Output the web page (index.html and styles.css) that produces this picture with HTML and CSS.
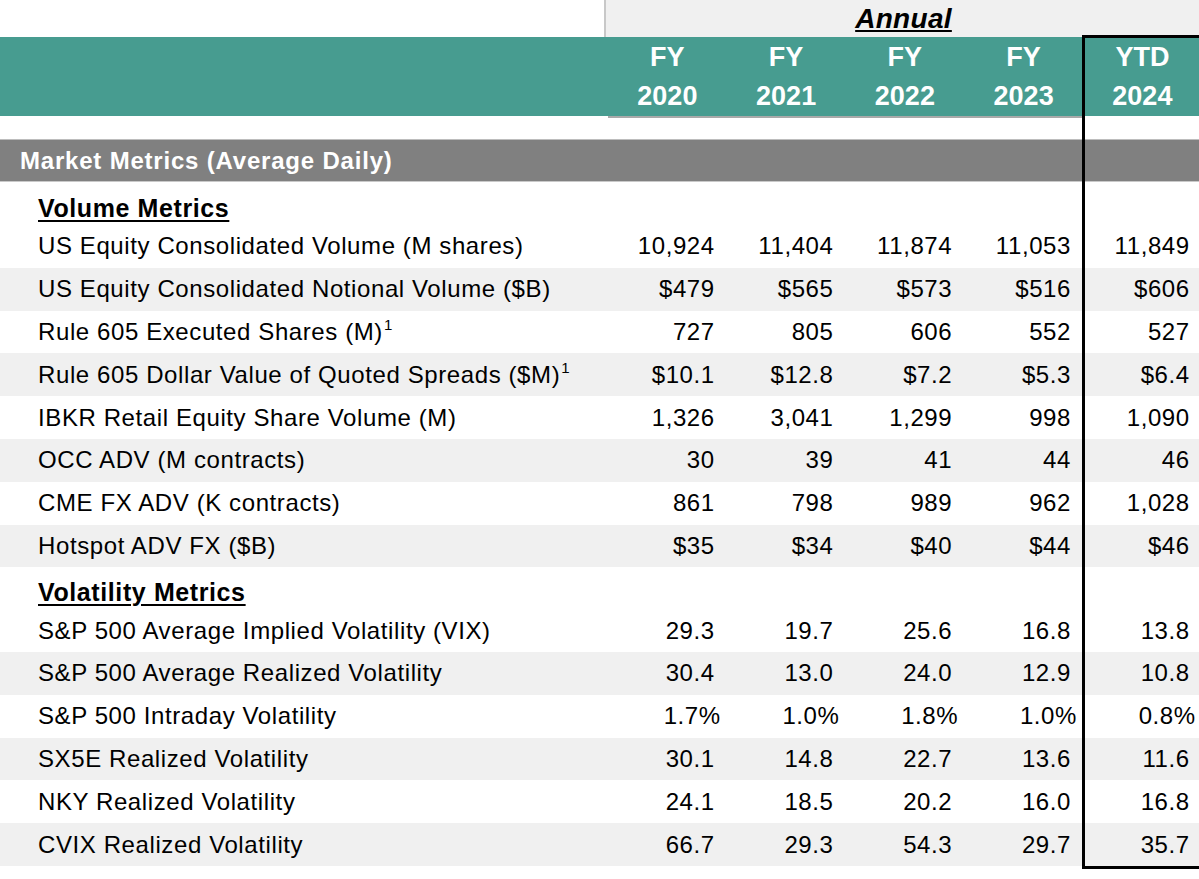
FILE: index.html
```html
<!DOCTYPE html>
<html lang="en">
<head>
<meta charset="utf-8">
<title>Market Metrics</title>
<link rel="stylesheet" href="styles.css">
</head>
<body>
<div class="sheet">
  <div class="annual-band"><span class="annual">Annual</span></div>
  <div class="head">
    <div class="head-label"></div>
    <div class="head-cell fy">FY<br>2020</div>
    <div class="head-cell fy">FY<br>2021</div>
    <div class="head-cell fy">FY<br>2022</div>
    <div class="head-cell fy">FY<br>2023</div>
    <div class="head-cell">YTD<br>2024</div>
  </div>
  <div class="spacer"></div>
  <div class="section">Market Metrics (Average Daily)</div>

  <div class="group">Volume Metrics</div>
  <div class="row"><div class="label">US Equity Consolidated Volume (M shares)</div><div class="v">10,924</div><div class="v">11,404</div><div class="v">11,874</div><div class="v">11,053</div><div class="v">11,849</div></div>
  <div class="row alt"><div class="label">US Equity Consolidated Notional Volume ($B)</div><div class="v">$479</div><div class="v">$565</div><div class="v">$573</div><div class="v">$516</div><div class="v">$606</div></div>
  <div class="row"><div class="label">Rule 605 Executed Shares (M)<sup>1</sup></div><div class="v">727</div><div class="v">805</div><div class="v">606</div><div class="v">552</div><div class="v">527</div></div>
  <div class="row alt"><div class="label">Rule 605 Dollar Value of Quoted Spreads ($M)<sup>1</sup></div><div class="v">$10.1</div><div class="v">$12.8</div><div class="v">$7.2</div><div class="v">$5.3</div><div class="v">$6.4</div></div>
  <div class="row"><div class="label">IBKR Retail Equity Share Volume (M)</div><div class="v">1,326</div><div class="v">3,041</div><div class="v">1,299</div><div class="v">998</div><div class="v">1,090</div></div>
  <div class="row alt"><div class="label">OCC ADV (M contracts)</div><div class="v">30</div><div class="v">39</div><div class="v">41</div><div class="v">44</div><div class="v">46</div></div>
  <div class="row"><div class="label">CME FX ADV (K contracts)</div><div class="v">861</div><div class="v">798</div><div class="v">989</div><div class="v">962</div><div class="v">1,028</div></div>
  <div class="row alt"><div class="label">Hotspot ADV FX ($B)</div><div class="v">$35</div><div class="v">$34</div><div class="v">$40</div><div class="v">$44</div><div class="v">$46</div></div>

  <div class="group group-2">Volatility Metrics</div>
  <div class="row"><div class="label">S&amp;P 500 Average Implied Volatility (VIX)</div><div class="v">29.3</div><div class="v">19.7</div><div class="v">25.6</div><div class="v">16.8</div><div class="v">13.8</div></div>
  <div class="row alt"><div class="label">S&amp;P 500 Average Realized Volatility</div><div class="v">30.4</div><div class="v">13.0</div><div class="v">24.0</div><div class="v">12.9</div><div class="v">10.8</div></div>
  <div class="row"><div class="label">S&amp;P 500 Intraday Volatility</div><div class="v pct">1.7%</div><div class="v pct">1.0%</div><div class="v pct">1.8%</div><div class="v pct">1.0%</div><div class="v pct">0.8%</div></div>
  <div class="row alt"><div class="label">SX5E Realized Volatility</div><div class="v">30.1</div><div class="v">14.8</div><div class="v">22.7</div><div class="v">13.6</div><div class="v">11.6</div></div>
  <div class="row"><div class="label">NKY Realized Volatility</div><div class="v">24.1</div><div class="v">18.5</div><div class="v">20.2</div><div class="v">16.0</div><div class="v">16.8</div></div>
  <div class="row alt"><div class="label">CVIX Realized Volatility</div><div class="v">66.7</div><div class="v">29.3</div><div class="v">54.3</div><div class="v">29.7</div><div class="v">35.7</div></div>

  <div class="ytd-box"></div>
</div>
</body>
</html>
```

FILE: styles.css
```css
html, body {
  margin: 0;
  padding: 0;
  background: #ffffff;
  overflow: hidden;
}

.sheet {
  position: relative;
  width: 1199px;
  height: 879px;
  overflow: hidden;
  font-family: "Liberation Sans", Arial, Helvetica, sans-serif;
  color: #000;
}

.annual-band {
  margin-left: 604px;
  height: 37px;
  background: #f0f0f0;
  border-left: 2px solid #c8c8c8;
  box-sizing: border-box;
  display: flex;
  align-items: center;
  justify-content: center;
  padding-left: 2px;
}

.annual {
  font-size: 28px;
  font-weight: bold;
  font-style: italic;
  text-decoration: underline;
  text-decoration-thickness: 2px;
  text-underline-offset: 2px;
  letter-spacing: 0.3px;
  line-height: 32px;
}

.head {
  display: grid;
  grid-template-columns: 608px repeat(5, 118.75px);
  width: 1202px;
  height: 79px;
  background: #479c90;
}

.head-cell {
  color: #fff;
  font-weight: bold;
  font-size: 27px;
  line-height: 39px;
  text-align: center;
  padding-top: 1px;
}

.head-cell.fy {
  border-bottom: 2px solid #a9a9a9;
}

.spacer {
  height: 23px;
}

.section {
  height: 43px;
  box-sizing: border-box;
  background: #808080;
  border-top: 1px solid #bdbdbd;
  border-bottom: 1px solid #c9c9c9;
  color: #fff;
  font-weight: bold;
  font-size: 24px;
  letter-spacing: 0.8px;
  padding-left: 20px;
  display: flex;
  align-items: center;
}

.group {
  height: 43px;
  box-sizing: border-box;
  padding-left: 38px;
  padding-top: 12px;
  font-size: 25px;
  font-weight: bold;
  letter-spacing: 0.6px;
  text-decoration: underline;
  text-decoration-thickness: 2px;
  text-underline-offset: 3px;
  line-height: 28px;
}

.group-2 {
  height: 41.8px;
  padding-top: 11px;
}

.row {
  display: grid;
  grid-template-columns: 608px repeat(5, 118.75px);
  width: 1202px;
  height: 42.8px;
  align-items: center;
  font-size: 24px;
  letter-spacing: 0.6px;
}

.row.alt {
  background: #f0f0f0;
}

.label {
  padding-left: 38px;
  white-space: nowrap;
}

.label sup {
  font-size: 15px;
  letter-spacing: 0;
  vertical-align: 0;
  position: relative;
  top: -10px;
  margin-left: 1px;
}

.v {
  text-align: right;
  padding-right: 12px;
  white-space: nowrap;
}

.v.pct {
  padding-right: 6px;
}

.ytd-box {
  position: absolute;
  left: 1082px;
  top: 35px;
  width: 200px;
  height: 834px;
  box-sizing: border-box;
  border: 3px solid #000;
  pointer-events: none;
}
```
